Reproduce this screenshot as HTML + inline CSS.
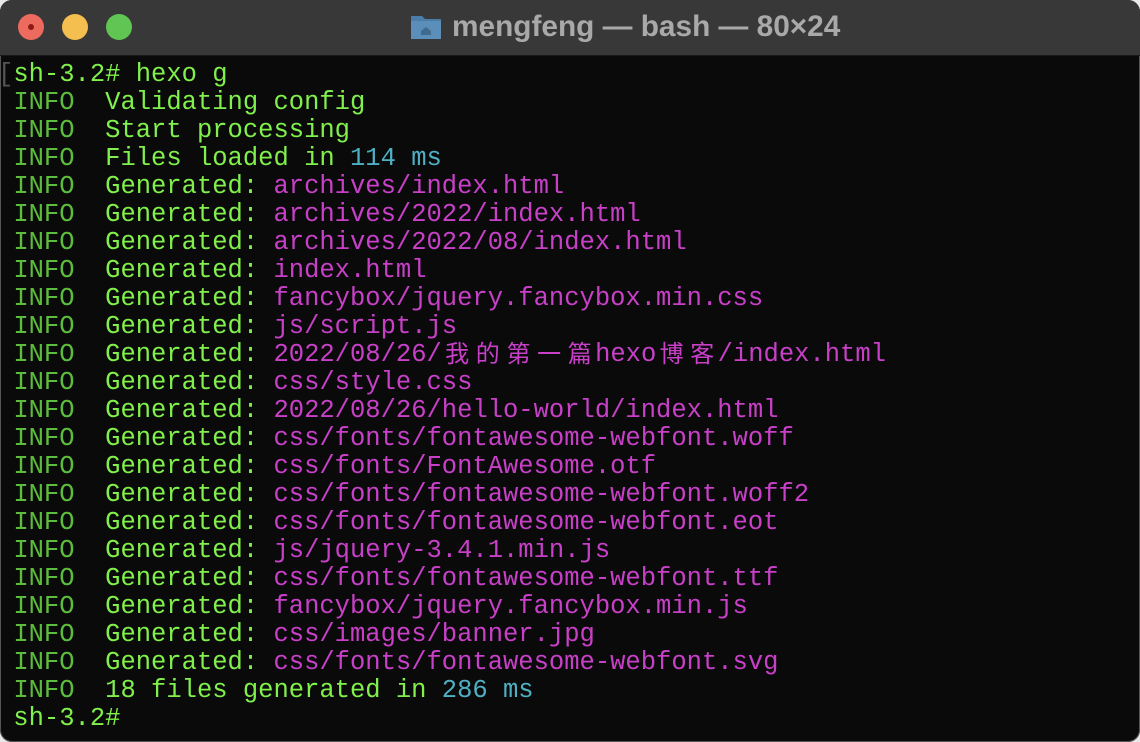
<!DOCTYPE html>
<html><head><meta charset="utf-8"><style>
html,body{margin:0;padding:0;background:#e8e8e8;width:1140px;height:742px;overflow:hidden}
.win{position:absolute;left:0;top:0;width:1140px;height:742px;border-radius:12px;overflow:hidden;background:#0a0a0a;box-shadow:inset 0 0 0 1px #555}
.bar{position:absolute;left:0;top:0;width:1140px;height:55px;background:#383838;border-bottom:1px solid #1a1a1a}
.dot{position:absolute;top:14px;width:26px;height:26px;border-radius:50%}
.title{position:absolute;left:452px;top:10px;font:bold 29.8px "Liberation Sans",sans-serif;color:#a9a9a9;white-space:nowrap;letter-spacing:0}
.term{position:absolute;left:-2px;top:61px;font-family:"Liberation Mono",monospace;font-size:25.5px;line-height:28px;white-space:pre;color:#80f04c}
.i{color:#5cbc3c}.m{color:#c840c8}.c{color:#4fb0c4}
.k{display:inline-block;width:30.66px;height:28px;line-height:28px;vertical-align:top;text-align:center;font-family:"Noto Sans CJK SC",sans-serif;font-size:24px;position:relative;top:-3px}
</style></head><body>
<div class="win">
<div class="bar">
<div class="dot" style="left:18px;background:#ed6a5e"><div style="position:absolute;left:10px;top:10px;width:6px;height:6px;border-radius:50%;background:#8c1a10"></div></div>
<div class="dot" style="left:62px;background:#f5bf4f"></div>
<div class="dot" style="left:106px;background:#61c554"></div>
<svg style="position:absolute;left:410px;top:13px" width="32" height="27" viewBox="0 0 32 27"><path d="M1 3h11l3 3h16v20H1z" fill="#4a7ea8"/><rect x="1" y="8" width="30" height="18" fill="#5b8fba"/><path d="M11 18l5-4 5 4v4h-10z" fill="#3e6a8e"/></svg>
<div class="title">mengfeng — bash — 80×24</div>
</div>
<div class="term"><span style="color:#555">[</span>sh-3.2# hexo g
 <span class="i">INFO</span>  Validating config
 <span class="i">INFO</span>  Start processing
 <span class="i">INFO</span>  Files loaded in <span class="c">114 ms</span>
 <span class="i">INFO</span>  Generated: <span class="m">archives/index.html</span>
 <span class="i">INFO</span>  Generated: <span class="m">archives/2022/index.html</span>
 <span class="i">INFO</span>  Generated: <span class="m">archives/2022/08/index.html</span>
 <span class="i">INFO</span>  Generated: <span class="m">index.html</span>
 <span class="i">INFO</span>  Generated: <span class="m">fancybox/jquery.fancybox.min.css</span>
 <span class="i">INFO</span>  Generated: <span class="m">js/script.js</span>
 <span class="i">INFO</span>  Generated: <span class="m">2022/08/26/<span class="k">我</span><span class="k">的</span><span class="k">第</span><span class="k">一</span><span class="k">篇</span>hexo<span class="k">博</span><span class="k">客</span>/index.html</span>
 <span class="i">INFO</span>  Generated: <span class="m">css/style.css</span>
 <span class="i">INFO</span>  Generated: <span class="m">2022/08/26/hello-world/index.html</span>
 <span class="i">INFO</span>  Generated: <span class="m">css/fonts/fontawesome-webfont.woff</span>
 <span class="i">INFO</span>  Generated: <span class="m">css/fonts/FontAwesome.otf</span>
 <span class="i">INFO</span>  Generated: <span class="m">css/fonts/fontawesome-webfont.woff2</span>
 <span class="i">INFO</span>  Generated: <span class="m">css/fonts/fontawesome-webfont.eot</span>
 <span class="i">INFO</span>  Generated: <span class="m">js/jquery-3.4.1.min.js</span>
 <span class="i">INFO</span>  Generated: <span class="m">css/fonts/fontawesome-webfont.ttf</span>
 <span class="i">INFO</span>  Generated: <span class="m">fancybox/jquery.fancybox.min.js</span>
 <span class="i">INFO</span>  Generated: <span class="m">css/images/banner.jpg</span>
 <span class="i">INFO</span>  Generated: <span class="m">css/fonts/fontawesome-webfont.svg</span>
 <span class="i">INFO</span>  18 files generated in <span class="c">286 ms</span>
 sh-3.2#</div>
</div>
</body></html>
